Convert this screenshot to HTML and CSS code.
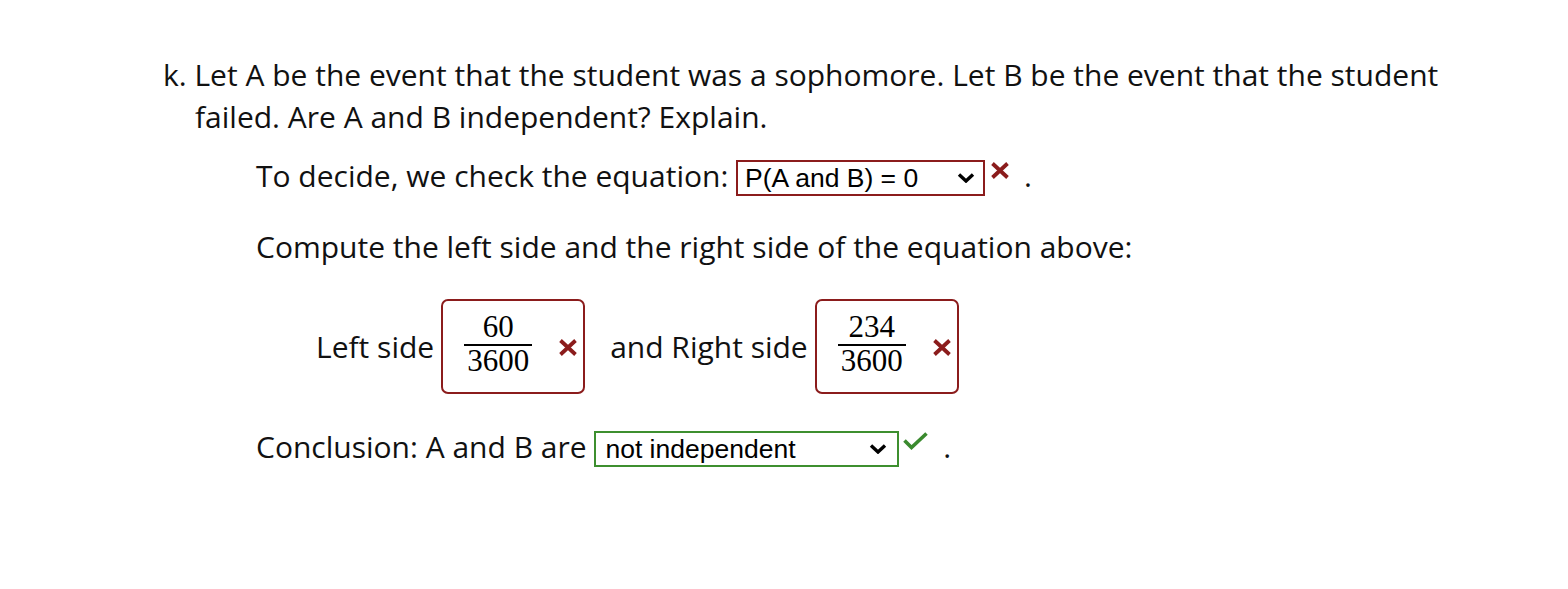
FILE: index.html
```html
<!DOCTYPE html>
<html>
<head>
<meta charset="utf-8">
<link rel="stylesheet" href="styles.css">
</head>
<body>
<div class="problem">
  <p class="question">k. Let A be the event that the student was a sophomore. Let B be the event that the student failed. Are A and B independent? Explain.</p>
  <div class="parts">
    <p class="line line-decide">To decide, we check the equation: <span class="select select-wrong"><span class="select-text">P(A and B) = 0</span><svg class="chev" width="18" height="10" viewBox="0 0 18 10"><path d="M2 1.5 L9 8 L16 1.5" fill="none" stroke="#000" stroke-width="3.4"/></svg></span><svg class="mark-x" width="18" height="17" viewBox="0 0 18 17"><path d="M1.5 1.5 L16.5 15.5 M16.5 1.5 L1.5 15.5" stroke="#8b1c1c" stroke-width="3.8"/></svg> <span class="dot">.</span></p>
    <p class="line line-compute">Compute the left side and the right side of the equation above:</p>
    <div class="line line-sides">
      <span class="label">Left side</span>
      <span class="answer"><span class="frac"><span class="num">60</span><span class="den">3600</span></span><svg class="mark-x" width="18" height="17" viewBox="0 0 18 17"><path d="M1.5 1.5 L16.5 15.5 M16.5 1.5 L1.5 15.5" stroke="#8b1c1c" stroke-width="3.8"/></svg></span>
      <span class="label label-right">and Right side</span>
      <span class="answer"><span class="frac"><span class="num">234</span><span class="den">3600</span></span><svg class="mark-x" width="18" height="17" viewBox="0 0 18 17"><path d="M1.5 1.5 L16.5 15.5 M16.5 1.5 L1.5 15.5" stroke="#8b1c1c" stroke-width="3.8"/></svg></span>
    </div>
    <p class="line line-concl">Conclusion: A and B are <span class="select select-right"><span class="select-text">not independent</span><svg class="chev" width="18" height="10" viewBox="0 0 18 10"><path d="M2 1.5 L9 8 L16 1.5" fill="none" stroke="#000" stroke-width="3.4"/></svg></span><svg class="mark-check" width="25" height="18" viewBox="0 0 25 18"><path d="M1.5 8.5 L8.5 15.5 L23.5 1.5" fill="none" stroke="#3a8a2e" stroke-width="3.6"/></svg> <span class="dot">.</span></p>
  </div>
</div>
</body>
</html>
```
FILE: styles.css
```css
html, body {
  margin: 0;
  padding: 0;
  background: #fff;
}
body {
  font-family: "Open Sans", "Liberation Sans", sans-serif;
  font-size: 30px;
  line-height: 42px;
  color: #111;
}
.problem {
  padding: 54px 0 0 163px;
  width: 1320px;
}
.question {
  margin: 0;
  padding-left: 32px;
  text-indent: -32px;
}
.parts {
  padding-left: 93px;
}
.line {
  margin: 0;
}
.line-decide {
  margin-top: 17px;
}
.line-compute {
  margin-top: 29px;
}
.line-sides {
  margin-top: 31px;
  padding-left: 60px;
  display: flex;
  align-items: center;
}
.line-concl {
  margin-top: 32px;
}
.select {
  display: inline-flex;
  align-items: center;
  justify-content: space-between;
  box-sizing: border-box;
  height: 36px;
  padding: 0 8px 0 7px;
  font-family: "Liberation Sans", Arial, sans-serif;
  font-size: 26.5px;
  line-height: 32px;
  color: #000;
  vertical-align: baseline;
}
.select-text {
  line-height: 32px;
}
.select-wrong {
  width: 249px;
  border: 2px solid #8b1c1c;
}
.select-right {
  width: 305px;
  padding-left: 9px;
  padding-right: 10px;
  border: 2px solid #3d8f2f;
}
.chev {
  display: block;
}
.mark-x {
  vertical-align: 8px;
  margin-left: 6px;
}
.mark-check {
  vertical-align: 8px;
  margin-left: 4px;
}
.dot {
  margin-left: 7px;
}
.label {
  margin-right: 7px;
}
.label-right {
  margin-left: 25px;
}
.answer {
  display: inline-flex;
  align-items: center;
  box-sizing: border-box;
  width: 144px;
  height: 95px;
  border: 2px solid #8b1c1c;
  border-radius: 7px;
  padding-left: 21px;
}
.answer .mark-x {
  display: block;
  margin-left: 27px;
  margin-top: 1px;
}
.frac {
  display: flex;
  flex-direction: column;
  align-items: center;
  font-family: "Liberation Serif", "Times New Roman", serif;
  font-size: 31px;
  line-height: 24px;
  color: #000;
  width: 68px;
  margin-bottom: 5px;
}
.num {
  display: block;
  width: 100%;
  text-align: center;
  border-bottom: 2px solid #000;
  padding-bottom: 5px;
}
.den {
  display: block;
  padding-top: 3px;
}
```
